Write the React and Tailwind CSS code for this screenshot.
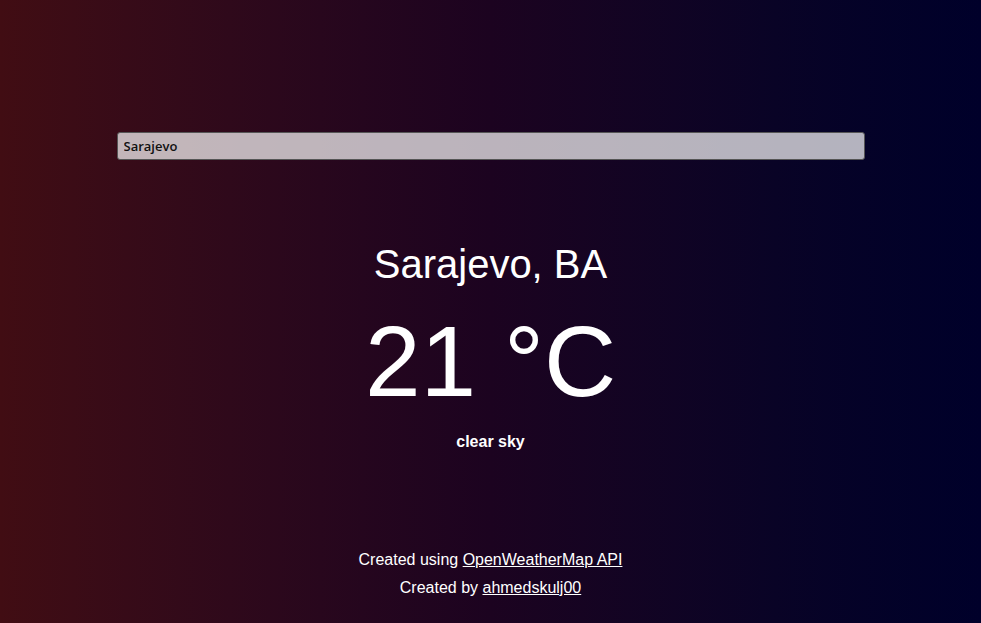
import React, { useState } from "react";

export default function App() {
  const [city, setCity] = useState("Sarajevo");

  return (
    <div
      className="min-h-screen w-full bg-gradient-to-r from-[#410d13] via-[#1c0320] to-[#00002a] text-white flex flex-col items-center"
      style={{ fontFamily: '"Liberation Sans", Arial, sans-serif' }}
    >
      {/* Search */}
      <div className="w-[748px] mt-[132px]">
        <input
          value={city}
          onChange={(e) => setCity(e.target.value)}
          className="w-full h-[28px] rounded-[3px] border border-[#555] bg-white/70 px-[6px] text-[13px] font-semibold text-[#111] outline-none"
          style={{ fontFamily: '"Open Sans", "Noto Sans", sans-serif' }}
        />
      </div>

      {/* Weather */}
      <div className="flex flex-col items-center mt-[80px]">
        <h1 className="text-[40px] leading-[48px]">Sarajevo, BA</h1>
        <p className="text-[100px] leading-[120px] mt-[13px]">21 °C</p>
        <p className="text-[16px] leading-[24px] font-bold mt-[9px]">clear sky</p>
      </div>

      {/* Footer */}
      <div className="flex flex-col items-center mt-[92px] text-[16px] leading-[28px]">
        <p>
          Created using <a href="#" className="underline">OpenWeatherMap API</a>
        </p>
        <p>
          Created by <a href="#" className="underline">ahmedskulj00</a>
        </p>
      </div>
    </div>
  );
}
